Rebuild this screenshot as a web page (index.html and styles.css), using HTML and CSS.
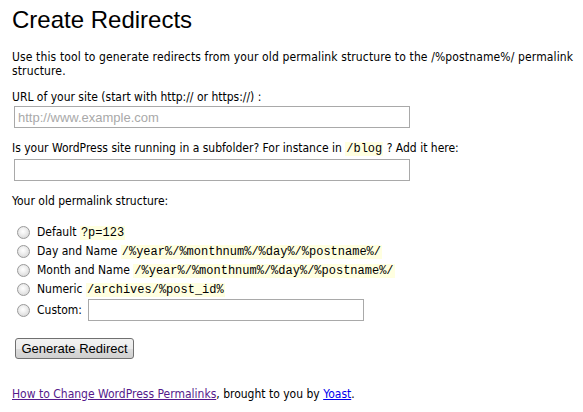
FILE: index.html
```html
<!DOCTYPE html>
<html lang="en">
<head>
<meta charset="utf-8">
<title>Create Redirects</title>
<link rel="stylesheet" href="styles.css">
</head>
<body>
<div class="page">
  <h1 class="title">Create Redirects</h1>
  <p class="intro">Use this tool to generate redirects from your old permalink structure to the /%postname%/ permalink structure.</p>
  <form class="form">
    <label class="label label-url" for="url">URL of your site (start with http:// or https://) :</label>
    <input class="text-input" id="url" type="text" placeholder="http://www.example.com">
    <label class="label label-sub" for="sub">Is your WordPress site running in a subfolder? For instance in <code class="code">/blog</code> ? Add it here:</label>
    <input class="text-input" id="sub" type="text">
    <p class="label label-old">Your old permalink structure:</p>
    <ul class="options">
      <li class="option"><input class="radio" type="radio" name="pl"><span>Default <code class="code">?p=123</code></span></li>
      <li class="option"><input class="radio" type="radio" name="pl"><span>Day and Name <code class="code">/%year%/%monthnum%/%day%/%postname%/</code></span></li>
      <li class="option"><input class="radio" type="radio" name="pl"><span>Month and Name <code class="code">/%year%/%monthnum%/%day%/%postname%/</code></span></li>
      <li class="option"><input class="radio" type="radio" name="pl"><span>Numeric <code class="code">/archives/%post_id%</code></span></li>
      <li class="option option-custom"><input class="radio" type="radio" name="pl"><span>Custom:</span><input class="custom-input" type="text"></li>
    </ul>
    <button class="button" type="button">Generate Redirect</button>
  </form>
  <p class="footer"><a class="link visited" href="#">How to Change WordPress Permalinks</a>, brought to you by <a class="link" href="#">Yoast</a>.</p>
</div>
</body>
</html>
```

FILE: styles.css
```css
html, body {
  margin: 0;
  padding: 0;
  background: #ffffff;
}

.page {
  padding: 6px 0 0 12px;
  font-family: "DejaVu Sans Condensed", "DejaVu Sans", sans-serif;
  font-stretch: condensed;
  font-size: 12px;
  line-height: 14px;
  color: #000000;
}

.title {
  margin: 0;
  font-family: "Liberation Sans", Arial, sans-serif;
  font-stretch: normal;
  font-size: 24px;
  line-height: 28px;
  font-weight: normal;
}

.intro {
  margin: 16px 0 0 0;
  letter-spacing: 0.13px;
}

.form {
  display: flex;
  flex-direction: column;
  align-items: flex-start;
  margin: 0;
}

.label {
  display: block;
  margin: 0;
}

.label-url {
  margin-top: 12px;
}

.label-sub {
  margin-top: 13px;
}

.label-old {
  margin-top: 13px;
}

.text-input {
  box-sizing: border-box;
  width: 396px;
  height: 22px;
  margin: 2px 0 0 2px;
  padding: 1px 3px;
  border: 1px solid #a9a9a9;
  font-family: "Liberation Sans", Arial, sans-serif;
  font-size: 13px;
  color: #000;
  outline: none;
}

#sub {
  margin-top: 3px;
}

.text-input::placeholder {
  color: #a9a9a9;
}

.code {
  font-family: "Liberation Mono", "Courier New", monospace;
  font-stretch: normal;
  font-size: 12px;
  background: #ffffe0;
  padding: 0 1px;
}

.options {
  list-style: none;
  margin: 15px 0 0 0;
  padding: 0;
}

.option {
  display: flex;
  align-items: center;
  height: 19px;
  line-height: 19px;
  white-space: nowrap;
}

.option-custom {
  height: 22px;
}

.radio {
  appearance: none;
  -webkit-appearance: none;
  box-sizing: border-box;
  width: 13px;
  height: 13px;
  margin: 0 7px 0 5px;
  border: 1px solid #9a9a9a;
  border-radius: 50%;
  background: radial-gradient(circle at 45% 40%, #ffffff 0%, #f0f0f0 35%, #cfcfcf 100%);
  flex: none;
}

.custom-input {
  box-sizing: border-box;
  width: 276px;
  height: 22px;
  margin: 0 0 0 6px;
  padding: 1px 3px;
  border: 1px solid #a9a9a9;
  outline: none;
  font-family: "Liberation Sans", Arial, sans-serif;
  font-size: 13px;
}

.button {
  box-sizing: border-box;
  margin: 17px 0 0 3px;
  width: 119px;
  height: 21px;
  padding: 0 4px;
  border: 1px solid #707070;
  border-radius: 3px;
  background: linear-gradient(#f2f2f2 0%, #ebebeb 50%, #dddddd 50%, #cfcfcf 100%);
  font-family: "Liberation Sans", Arial, sans-serif;
  font-stretch: normal;
  font-size: 13px;
  color: #000;
  line-height: 17px;
}

.footer {
  margin: 28px 0 0 0;
}

.link {
  color: #0000ee;
  text-decoration: underline;
}

.link.visited {
  color: #551a8b;
}
```
